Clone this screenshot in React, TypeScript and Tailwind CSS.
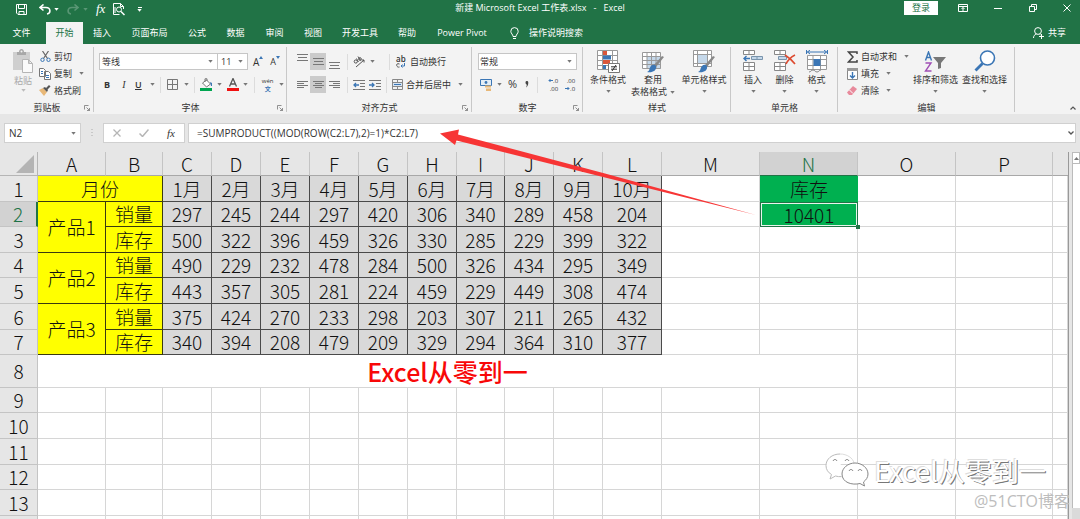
import type { ReactNode } from "react";

const UI = "font-['Open_Sans','Noto_Sans_CJK_SC',sans-serif]";
const SHEET = "font-['Noto_Sans_CJK_SC',sans-serif]";

function Caret({ className = "text-[#777]" }: { className?: string }) {
  return (
    <svg width="5" height="3" viewBox="0 0 5 3" className={`shrink-0 ${className}`} aria-hidden="true">
      <path d="M.3 0h4.400L2.500 2.700z" fill="currentColor" />
    </svg>
  );
}

function Icon({ w, h, children }: { w: number; h: number; children: ReactNode }) {
  return (
    <svg width={w} height={h} viewBox={`0 0 ${w} ${h}`} fill="none" className="shrink-0" aria-hidden="true">
      {children}
    </svg>
  );
}

function Launcher({ label }: { label: string }) {
  return (
    <button aria-label={label} className="absolute right-1 bottom-[3px]">
      <Icon w={6} h={6}>
        <path d="M.5 4.500V.5h4M2.500 2.500l3 3M5.500 3v2.500H3" stroke="#777" strokeWidth=".8" />
      </Icon>
    </button>
  );
}

function Group({ title, width, launcher, children }: { title: string; width: string; launcher?: boolean; children: ReactNode }) {
  return (
    <section aria-label={title} className={`relative flex shrink-0 flex-col pt-1 ${width}`}>
      <div className="h-[52px]">{children}</div>
      <div className="flex h-[14px] items-center justify-center pt-[2px] leading-3">{title}</div>
      {launcher && <Launcher label={`${title}设置`} />}
      <span className="absolute top-[3px] right-0 bottom-[2px] w-px bg-[#c8c8c8]" />
    </section>
  );
}

function SmallButton({ icon, label, caret, muted }: { icon: ReactNode; label: string; caret?: boolean; muted?: boolean }) {
  return (
    <button className={`flex h-[17px] items-center gap-[3px] leading-3 ${muted ? "text-[#aaa]" : ""}`}>
      <span className="flex w-3 justify-center">{icon}</span>
      <span>{label}</span>
      {caret && <span className="pl-1"><Caret /></span>}
    </button>
  );
}

function BigButton({ icon, lines, width }: { icon: ReactNode; lines: string[]; width: string }) {
  return (
    <button className={`flex flex-col items-center text-[9px] leading-3 whitespace-nowrap ${width}`}>
      <span className="flex h-[26px] items-center">{icon}</span>
      <span>{lines[0]}</span>
      {lines[1] ? (
        <span className="flex items-center gap-[3px]">
          {lines[1]}
          <Caret />
        </span>
      ) : (
        <span className="flex h-[11px] items-center">
          <Caret />
        </span>
      )}
    </button>
  );
}

const tabs = [
  { name: "文件", cls: "w-[43px] text-white" },
  { name: "开始", cls: "ml-[3px] w-[37px] bg-[#f3f3f3] text-[#217346]" },
  { name: "插入", cls: "w-[38px] text-white" },
  { name: "页面布局", cls: "w-[57px] text-white" },
  { name: "公式", cls: "w-[38px] text-white" },
  { name: "数据", cls: "w-[39px] text-white" },
  { name: "审阅", cls: "w-[39px] text-white" },
  { name: "视图", cls: "w-[38px] text-white" },
  { name: "开发工具", cls: "w-[56px] text-white" },
  { name: "帮助", cls: "w-[38px] text-white" },
  { name: "Power Pivot", cls: "w-[72px] text-white" },
];

function TitleBar() {
  return (
    <div className="grid h-[22px] grid-cols-3 items-start pt-px text-white">
      <div className="flex h-4 items-center pl-4">
        <button aria-label="保存" className="mr-3">
          <Icon w={11} h={11}>
            <path d="M.5.5h10v10H2L.5 9zM2.500.5v4h6v-4M3 10.500v-3h5v3" stroke="#fff" />
          </Icon>
        </button>
        <button aria-label="撤消" className="flex items-center gap-[3px]">
          <Icon w={12} h={11}>
            <path d="M1 3.500h6c5 0 5 6 1 6.500M4.500.5l-3.500 3 3.500 3" stroke="#fff" strokeWidth="1.600" />
          </Icon>
          <Caret className="text-white" />
        </button>
        <button aria-label="恢复" className="ml-2 flex items-center gap-1 opacity-25">
          <Icon w={12} h={11}>
            <path d="M11 3.500H5c-5 0-5 6-1 6.500M7.500.5l3.500 3-3.500 3" stroke="#fff" strokeWidth="1.600" />
          </Icon>
          <Caret className="text-white" />
        </button>
        <button aria-label="插入函数" className="ml-2 font-['Liberation_Serif',serif] text-[13px] leading-4 italic">fx</button>
        <button aria-label="打印预览" className="ml-2">
          <Icon w={12} h={13}>
            <path d="M10.500 6V3.500l-3-3h-7v11h6M7.500.5v3h3M2 10V4" stroke="#fff" />
            <circle cx="6" cy="6.500" r="2.500" stroke="#fff" />
            <path d="M8 8.500l3.500 3.500" stroke="#fff" strokeWidth="1.500" />
          </Icon>
        </button>
        <button aria-label="自定义快速访问工具栏" className="ml-3 flex flex-col items-center gap-px">
          <span className="h-px w-1 bg-white" />
          <Caret className="text-white" />
        </button>
      </div>
      <h1 className="h-[13px] text-center text-[9px] leading-[13px] whitespace-pre">新建 Microsoft Excel 工作表.xlsx   -   Excel</h1>
      <div className="flex h-[14px] items-center justify-end pr-[9px]">
        <button className="mr-5 h-[14px] w-[34px] bg-white text-[9px] leading-[14px] text-[#217346]">登录</button>
        <button aria-label="功能区显示选项" className="mr-[26px]">
          <Icon w={10} h={8}>
            <path d="M.5.500h9v7h-9zM.5 2.500h9M5 7V3.500M3.500 5L5 3.500 6.500 5" stroke="#fff" />
          </Icon>
        </button>
        <button aria-label="最小化" className="mr-[27px]">
          <Icon w={8} h={8}><path d="M0 4.500h8" stroke="#fff" /></Icon>
        </button>
        <button aria-label="向下还原" className="mr-[26px]">
          <Icon w={8} h={8}><path d="M.5 2.500h5v5h-5zM2.500 2.500v-2h5v5h-2" stroke="#fff" /></Icon>
        </button>
        <button aria-label="关闭">
          <Icon w={8} h={8}><path d="M.5.500l7 7M7.500.500l-7 7" stroke="#fff" /></Icon>
        </button>
      </div>
    </div>
  );
}

function TabBar() {
  return (
    <nav className="flex h-[22px] items-stretch text-[9px] text-white">
      {tabs.map((t) => (
        <button key={t.name} className={`shrink-0 whitespace-nowrap ${t.cls}`}>{t.name}</button>
      ))}
      <button className="ml-3 flex items-center gap-[10px] whitespace-nowrap">
        <Icon w={9} h={13}>
          <path d="M3 9.500C3 7.500.8 6.500.8 4.300a3.700 3.700 0 017.400 0C8.200 6.500 6 7.500 6 9.500zM3 11.500h3" stroke="#fff" />
        </Icon>
        操作说明搜索
      </button>
      <button className="mr-[14px] ml-auto flex items-center gap-1">
        <Icon w={11} h={12}>
          <circle cx="5" cy="4" r="3.400" stroke="#fff" />
          <path d="M.5 11c0-2 1-3.500 3-4M6.500 7.200l1 .6M8.500 7v5M6 9.500h5" stroke="#fff" />
        </Icon>
        共享
      </button>
    </nav>
  );
}

function Lines({ rows }: { rows: [number, number][] }) {
  return (
    <Icon w={11} h={rows.length > 3 ? 10 : 9}>
      {rows.map(([x, w], i) => (
        <path key={i} d={`M${x} ${i * (rows.length > 3 ? 2 : 3) + 1.5}h${w}`} stroke="#777" />
      ))}
    </Icon>
  );
}

function ClipboardGroup() {
  return (
    <Group title="剪贴板" width="w-[94px]" launcher>
      <div className="flex">
        <button className="ml-3 flex w-[22px] flex-col items-center text-[#aaa]">
          <Icon w={22} h={26}>
            <path d="M1 4h17v18H1z" fill="#cfcfcf" />
            <path d="M5 7V4h2c0-4 5-4 5 0h2v3z" fill="#a8a8a8" />
            <circle cx="9.500" cy="3.500" r="1" fill="#f3f3f3" />
            <path d="M10.500 11.500h6l4 4v9h-10zM16.500 11.500v4h4" fill="#fafafa" stroke="#b5b5b5" />
          </Icon>
          <span className="leading-[13px]">粘贴</span>
          <span className="pt-[2px]"><Caret className="text-[#bbb]" /></span>
        </button>
        <div className="ml-[5px] flex flex-col">
          <SmallButton label="剪切" icon={
            <Icon w={11} h={11}>
              <path d="M2.500 0l5 7.500M8.500 0l-5 7.500" stroke="#666" strokeWidth="1.200" />
              <circle cx="2.500" cy="8.800" r="1.700" stroke="#3b76b5" />
              <circle cx="8.500" cy="8.800" r="1.700" stroke="#3b76b5" />
            </Icon>} />
          <SmallButton label="复制" caret icon={
            <Icon w={12} h={12}>
              <path d="M.5.500h4l2 2v6h-6zM5.500 3.500h4l2 2v6h-6z" fill="#fff" stroke="#777" />
              <path d="M2 3.500h2M2 5.500h2M7 7.500h3M7 9.500h3" stroke="#3b76b5" />
            </Icon>} />
          <SmallButton label="格式刷" icon={
            <Icon w={12} h={11}>
              <path d="M0 5l4-2 4 4-3 4z" fill="#e8b878" />
              <path d="M4 3l2-1 3 3-1 2zM7 3l3-3 1.500 1.500-3 3z" fill="#555" />
            </Icon>} />
        </div>
      </div>
    </Group>
  );
}

function FontGroup() {
  return (
    <Group title="字体" width="w-[193px]" launcher>
      <div className="flex items-center pt-[5px] pl-[5px]">
        <div className="relative flex h-[17px] w-[119px] items-center border border-[#c6c6c6] bg-white">
          <select aria-label="字体名称" className="w-full appearance-none pl-[2px] outline-none"><option>等线</option></select>
          <span className="pointer-events-none absolute right-1"><Caret /></span>
        </div>
        <div className="relative flex h-[17px] w-[30px] items-center border border-l-0 border-[#c6c6c6] bg-white">
          <select aria-label="字号" className="w-full appearance-none pl-[3px] outline-none"><option>11</option></select>
          <span className="pointer-events-none absolute right-1"><Caret /></span>
        </div>
        <button aria-label="增大字号" className="ml-[5px] flex items-start text-[10px] leading-3">A<Icon w={4} h={3}><path d="M0 3h4L2 0z" fill="#3b76b5" /></Icon></button>
        <button aria-label="减小字号" className="ml-[7px] flex items-start text-[9px] leading-3">A<Icon w={4} h={3}><path d="M0 0h4L2 3z" fill="#3b76b5" /></Icon></button>
      </div>
      <div className="mt-[6px] flex h-[17px] items-center pl-2">
        <button className="w-[10px] font-bold">B</button>
        <button className="ml-[7px] w-[10px] font-['Liberation_Serif',serif] text-[10px] italic">I</button>
        <button aria-label="下划线" className="ml-[6px] flex items-center gap-2"><span className="font-semibold underline">U</span><Caret /></button>
        <span className="mr-[6px] ml-[5px] h-4 w-px bg-[#dcdcdc]" />
        <button aria-label="边框" className="flex items-center gap-[6px]">
          <Icon w={11} h={11}><path d="M.5.500h10v10h-10zM5.500.500v10M.5 5.500h10" stroke="#777" /></Icon>
          <Caret />
        </button>
        <span className="mx-[5px] h-4 w-px bg-[#dcdcdc]" />
        <button aria-label="填充颜色" className="flex items-center gap-1">
          <Icon w={13} h={13}>
            <path d="M2.500 5l4-3 4 4-4 3z" fill="#fff" stroke="#777" />
            <path d="M5 4V.8h2V3" stroke="#777" />
            <path d="M10 4l2 1v3h-1z" fill="#3b76b5" />
            <path d="M0 10h12v3H0z" fill="#00a550" />
          </Icon>
          <Caret />
        </button>
        <button aria-label="字体颜色" className="ml-[5px] flex items-center gap-1">
          <Icon w={12} h={13}>
            <path d="M2.500 8.500L6 .5l3.500 8M4 6h4" stroke="#555" strokeWidth="1.300" />
            <path d="M0 10h12v3H0z" fill="#f01010" />
          </Icon>
          <Caret />
        </button>
        <span className="mx-[6px] h-4 w-px bg-[#dcdcdc]" />
        <button aria-label="拼音" className="flex items-center gap-1">
          <span className="flex w-[14px] flex-col items-center text-[6px] leading-[8px]">wén<span className="font-bold text-[#3b76b5]">文</span></span>
          <Caret />
        </button>
      </div>
    </Group>
  );
}

function AlignGroup() {
  const on = "bg-[#cbcbcb]";
  return (
    <Group title="对齐方式" width="w-[185px]" launcher>
      <div className="flex items-center pt-[5px] pl-[7px]">
        <button aria-label="顶端对齐" className="flex h-[17px] w-4 items-start justify-center"><Lines rows={[[0, 11], [1, 9], [0, 11]]} /></button>
        <button aria-label="垂直居中" className={`flex h-[17px] w-4 items-center justify-center ${on}`}><Lines rows={[[0, 11], [1, 9], [0, 11]]} /></button>
        <button aria-label="底端对齐" className="flex h-[17px] w-4 items-end justify-center"><Lines rows={[[0, 11], [1, 9], [0, 11]]} /></button>
        <span className="mx-[5px] h-4 w-px bg-[#dcdcdc]" />
        <button aria-label="方向" className="flex items-center gap-1">
          <Icon w={13} h={12}>
            <path d="M3 11l8-7M8.500 4H11v2.500" stroke="#555" />
            <circle cx="2.800" cy="5.500" r="1.600" stroke="#555" />
            <path d="M3.500 2.500l2 3.500M5 .5l2.500 4" stroke="#555" />
            <circle cx="7" cy="3" r="1.300" stroke="#555" />
          </Icon>
          <Caret />
        </button>
        <span className="mr-[6px] ml-[14px] h-4 w-px bg-[#dcdcdc]" />
        <button className="flex items-center gap-1">
          <span className="flex w-[10px] flex-col items-start text-[8px] leading-[8px] font-semibold">
            <span>ab</span>
            <Icon w={9} h={5}>
              <path d="M3.500 1C1 0 .5 1.500.7 2.500S2 4.500 3.500 4" stroke="#555" />
              <path d="M8.500 0v3H5M6.500 1.500L5 3l1.500 1.500" stroke="#3b76b5" />
            </Icon>
          </span>
          自动换行
        </button>
      </div>
      <div className="mt-[6px] flex h-[17px] items-center pl-[7px]">
        <button aria-label="左对齐" className="flex h-[17px] w-4 items-center justify-center"><Lines rows={[[0, 11], [0, 7], [0, 11], [0, 7]]} /></button>
        <button aria-label="居中" className={`flex h-[17px] w-4 items-center justify-center ${on}`}><Lines rows={[[0, 11], [2, 7], [0, 11], [2, 7]]} /></button>
        <button aria-label="右对齐" className="flex h-[17px] w-4 items-center justify-center"><Lines rows={[[0, 11], [4, 7], [0, 11], [4, 7]]} /></button>
        <span className="mx-[5px] h-4 w-px bg-[#dcdcdc]" />
        <button aria-label="减少缩进量">
          <Icon w={12} h={10}><path d="M0 .5h12M7 3.500h5M7 6.500h5M0 9.500h12" stroke="#777" /><path d="M6 5H1M3 3L1 5l2 2" stroke="#3b76b5" strokeWidth="1.300" /></Icon>
        </button>
        <button aria-label="增加缩进量" className="ml-1">
          <Icon w={12} h={10}><path d="M0 .5h12M7 3.500h5M7 6.500h5M0 9.500h12" stroke="#777" /><path d="M0 5h5M3 3l2 2-2 2" stroke="#3b76b5" strokeWidth="1.300" /></Icon>
        </button>
        <span className="mr-[5px] ml-[5px] h-4 w-px bg-[#dcdcdc]" />
        <button className="flex items-center gap-[3px]">
          <Icon w={11} h={11}>
            <path d="M.5.500h10v10h-10zM.5 3.500h10M.5 7.500h10M5.500.500v3M5.500 7.500v3" stroke="#888" />
            <path d="M1 4h9v3H1z" fill="#d6e4f2" />
            <path d="M2 5.500h7" stroke="#3b76b5" />
          </Icon>
          合并后居中
          <span className="pl-1"><Caret /></span>
        </button>
      </div>
    </Group>
  );
}

function DecimalIcon({ more }: { more?: boolean }) {
  return (
    <span className="flex w-3 flex-col text-[6px] leading-[8px]">
      <span className="flex items-center justify-end">
        {more && <Icon w={5} h={5}><path d="M5 2.500H1M2.500 1L1 2.500 2.500 4" stroke="#3b76b5" /></Icon>}
        {more ? ".0" : ".00"}
      </span>
      <span className="flex items-center justify-end">
        {!more && <Icon w={5} h={5}><path d="M0 2.500h4M2.500 1L4 2.500 2.500 4" stroke="#3b76b5" /></Icon>}
        {more ? ".00" : ".0"}
      </span>
    </span>
  );
}

function NumberGroup() {
  return (
    <Group title="数字" width="w-[111px]" launcher>
      <div className="pt-[5px] pl-[6px]">
        <div className="relative flex h-[17px] w-[99px] items-center border border-[#c6c6c6] bg-white">
          <select aria-label="数字格式" className="w-full appearance-none pl-px outline-none"><option>常规</option></select>
          <span className="pointer-events-none absolute right-1"><Caret /></span>
        </div>
      </div>
      <div className="mt-[6px] flex h-[17px] items-center pl-2">
        <button aria-label="会计数字格式" className="flex items-center gap-1">
          <Icon w={13} h={12}>
            <path d="M.5.500h11v6h-11z" fill="#e4eef7" stroke="#3b76b5" />
            <circle cx="6" cy="3.500" r="1.400" fill="#3b76b5" />
            <path d="M5 6.500h6v2H5zM6 9.500h5V12H6z" fill="#e8b878" />
          </Icon>
          <Caret />
        </button>
        <button className="ml-[6px] text-[11px]">%</button>
        <button aria-label="千位分隔样式" className="ml-2">
          <Icon w={4} h={7}><path d="M.5 1.500a1.400 1.400 0 112.800 0C3.300 4 2.500 5.500 1 6.500c.6-1.200.8-2 .7-3C1 3.400.5 2.500.5 1.500z" fill="#444" /></Icon>
        </button>
        <span className="mx-2 h-4 w-px bg-[#dcdcdc]" />
        <button aria-label="增加小数位数"><DecimalIcon more /></button>
        <button aria-label="减少小数位数" className="ml-[5px]"><DecimalIcon /></button>
      </div>
    </Group>
  );
}

function Brush() {
  return (
    <>
      <path d="M22 5l-8 10-2-2 8-9z" fill="#888" />
      <path d="M14 14c1 5-4 7-9 6 3-1 2-4 4-6 2-2 4-1 5 0z" fill="#3b76b5" />
    </>
  );
}

function StyleGroup() {
  return (
    <Group title="样式" width="w-[148px]">
      <div className="flex">
        <BigButton width="ml-[2px] w-[46px]" lines={["条件格式"]} icon={
          <Icon w={23} h={23}>
            <path d="M.5.500h20v19H.5zM.5 5.500h20M.5 10.500h20M.5 15.500h20M5.500.500v19M15.500.500v19" fill="#fff" stroke="#999" />
            <path d="M6 1h4v4H6zM6 10h7v4H6z" fill="#d9563b" />
            <path d="M6 5.500h8v4H6zM6 15h3v4H6z" fill="#3b76b5" />
            <path d="M11.500 13.500h11v9h-11z" fill="#fff" stroke="#777" />
            <path d="M14 16.800h6M14 19.200h6M19 15l-4 6" stroke="#333" />
          </Icon>} />
        <BigButton width="w-[44px]" lines={["套用", "表格格式"]} icon={
          <Icon w={23} h={23}>
            <path d="M.5 2.500h18v16H.5z" fill="#fff" />
            <path d="M5 7h14v12H5z" fill="#c5d8ea" />
            <path d="M.5 2.500h18v16H.5zM.5 6.500h18M.5 10.500h18M.5 14.500h18M5 2.500v16M9.500 2.500v16M14 2.500v16" stroke="#999" />
            <g transform="translate(0 2)"><Brush /></g>
          </Icon>} />
        <BigButton width="ml-1 w-[50px]" lines={["单元格样式"]} icon={
          <Icon w={23} h={23}>
            <path d="M.5.500h18v16H.5zM.5 4.500h18M.5 13.500h18M4.500.500v16M14.500.500v16" fill="#fff" stroke="#999" />
            <path d="M5 5h9v8H5z" fill="#c5d8ea" />
            <g transform="translate(0 2)"><Brush /></g>
          </Icon>} />
      </div>
    </Group>
  );
}

function CellsGroup() {
  return (
    <Group title="单元格" width="w-[107px]">
      <div className="flex pl-[6px]">
        <BigButton width="w-[32px]" lines={["插入"]} icon={
          <Icon w={20} h={22}>
            <path d="M.5.500h11v4H.5zM6 .5v4M.5 12.500h11v8H.5zM6 12.500v8M.5 16.500h11" fill="#fff" stroke="#888" />
            <path d="M8.500 6.500h11v3h-11zM14 6.500v3" fill="#c5d8ea" stroke="#7a95ad" />
            <path d="M7 8.500H1M3.500 6L1 8.500 3.500 11" stroke="#3b76b5" strokeWidth="1.400" />
          </Icon>} />
        <BigButton width="w-[31px]" lines={["删除"]} icon={
          <Icon w={22} h={22}>
            <path d="M.5.500h11v4H.5zM6 .5v4M.5 12.500h11v8H.5zM6 12.500v8M.5 16.500h11" fill="#fff" stroke="#888" />
            <path d="M4.500 6.500h8v3h-8z" fill="#c5d8ea" stroke="#7a95ad" />
            <path d="M11 5c3 2 7 5 10 9M21 5c-4 2-7 5-9 9" stroke="#dd4b30" strokeWidth="1.600" />
          </Icon>} />
        <BigButton width="w-[33px]" lines={["格式"]} icon={
          <Icon w={22} h={23}>
            <path d="M1.500 5.500h19v14h-19zM1.500 9.500h19M1.500 15.500h19M7 5.500v14M14.500 5.500v14" fill="#fff" stroke="#999" />
            <path d="M7.500 9h7v7h-7z" fill="#3b76b5" />
            <path d="M1 2h20M4 0L1.500 2 4 4M18 0l2.500 2L18 4M.5 0v4M21.500 0v4" stroke="#3b76b5" />
            <path d="M3 22c2 0 2-2 4-2s2 2 4 2 2-2 4-2" stroke="#888" />
          </Icon>} />
      </div>
    </Group>
  );
}

function EditGroup() {
  return (
    <Group title="编辑" width="w-[177px]">
      <div className="flex">
        <div className="flex w-[72px] flex-col pl-2">
          <SmallButton label="自动求和" caret icon={
            <Icon w={11} h={12}><path d="M10 3V1H1.500l4.500 5-4.500 5H10V9" stroke="#444" strokeWidth="1.500" /></Icon>} />
          <SmallButton label="填充" caret icon={
            <Icon w={11} h={12}><path d="M.5.500h10v11H.5z" fill="#fff" stroke="#888" /><path d="M0 0h11v3H0z" fill="#999" /><path d="M5.500 4v6M3 7.500L5.500 10 8 7.500" stroke="#3b76b5" strokeWidth="1.400" /></Icon>} />
          <SmallButton label="清除" caret icon={
            <Icon w={11} h={10}><path d="M6 0l4 3-5 6H2L0 6.500z" fill="#e88a9c" /><path d="M2.500 4L6 7.500" stroke="#fff" /></Icon>} />
        </div>
        <BigButton width="w-[51px]" lines={["排序和筛选"]} icon={
          <Icon w={23} h={21}>
            <path d="M1.500 9.500l3-8.500 3 8.500M2.500 6.500h4" stroke="#3b76b5" strokeWidth="1.400" />
            <path d="M1.500 12h5.500L1.500 20h6" stroke="#a04fb5" strokeWidth="1.400" />
            <path d="M9 6h13l-5 6v5l-3 1v-6z" fill="#777" />
          </Icon>} />
        <BigButton width="w-[47px]" lines={["查找和选择"]} icon={
          <Icon w={22} h={22}>
            <circle cx="13.500" cy="8" r="7" fill="#fff" stroke="#3b76b5" strokeWidth="1.600" />
            <path d="M8.500 13.500L1.500 20.500" stroke="#3b76b5" strokeWidth="2.800" />
          </Icon>} />
      </div>
    </Group>
  );
}

function FormulaBar() {
  return (
    <div className="my-[9px] flex h-5 items-stretch px-1 text-[#333]">
      <div className="flex w-[77px] items-center border border-[#d0d0d0] bg-white">
        <input aria-label="名称框" defaultValue="N2" className="w-full min-w-0 pl-1 text-[10px] outline-none" />
        <button aria-label="展开名称框" className="pr-1"><Caret /></button>
      </div>
      <span className="mx-[10px] self-center"><Icon w={2} h={8}><path d="M1 0v8" stroke="#aaa" strokeDasharray="1 2" /></Icon></span>
      <div className="flex w-[82px] items-center justify-between border border-[#d0d0d0] bg-white px-[9px]">
        <button aria-label="取消"><Icon w={8} h={8}><path d="M.5.500l7 7M7.500.500l-7 7" stroke="#b5b5b5" strokeWidth="1.300" /></Icon></button>
        <button aria-label="输入"><Icon w={10} h={8}><path d="M.5 4.500l3 3 6-7" stroke="#b5b5b5" strokeWidth="1.500" /></Icon></button>
        <button aria-label="函数" className="font-['Liberation_Serif',serif] text-[11px] leading-[14px] italic">fx</button>
      </div>
      <div className="ml-[3px] flex flex-1 items-center border border-[#d0d0d0] bg-white">
        <input aria-label="编辑栏" defaultValue="=SUMPRODUCT((MOD(ROW(C2:L7),2)=1)*C2:L7)" className="min-w-0 flex-1 pl-2 text-[10px] outline-none" />
        <button aria-label="展开编辑栏" className="pr-px"><Icon w={6} h={4}><path d="M.5.500L3 3 5.500.500" stroke="#555" strokeWidth="1.300" /></Icon></button>
      </div>
    </div>
  );
}

const months = ["1月", "2月", "3月", "4月", "5月", "6月", "7月", "8月", "9月", "10月"];
const data = [
  [297, 245, 244, 297, 420, 306, 340, 289, 458, 204],
  [500, 322, 396, 459, 326, 330, 285, 229, 399, 322],
  [490, 229, 232, 478, 284, 500, 326, 434, 295, 349],
  [443, 357, 305, 281, 224, 459, 229, 449, 308, 474],
  [375, 424, 270, 233, 298, 203, 307, 211, 265, 432],
  [340, 394, 208, 479, 209, 329, 294, 364, 310, 377],
];
const letters = "ABCDEFGHIJKLMNOP".split("");
const columns = ["w-[38px]", "w-[68px]", "w-[57px]", "w-[49px]", "w-[49px]", "w-[49px]", "w-[49px]", "w-[49px]", "w-[49px]", "w-[48px]", "w-[49px]", "w-[49px]", "w-[59px]", "w-[98px]", "w-[98px]", "w-[98px]", "w-[97px]"];
const rowHeights = ["h-[26px]", "h-[25px]", "h-[26px]", "h-[25px]", "h-[26px]", "h-[26px]", "h-[25px]"];
const lowerHeights = ["h-[25px]", "h-[26px]", "h-[26px]", "h-[25px]", "h-[26px]", "h-[26px]"];

const plain = "border-r border-b border-[#d6d6d6] bg-white";
const yellow = "border-r border-b border-[#3a3a10] bg-[#ffff00]";
const gray = "border-r border-b border-[#4a4a4a] bg-[#d9d9d9]";

function Blank({ count }: { count: number }) {
  return <>{Array.from({ length: count }, (_, i) => <td key={i} className={`${plain} p-0`} />)}</>;
}

function RowHead({ n, active }: { n: number; active?: boolean }) {
  return (
    <th scope="row" className={`border-b border-[#c4c4c4] p-0 text-center font-light ${active ? "border-r-2 border-r-[#217346] bg-[#d2d2d2] text-[#217346]" : "border-r bg-[#e6e6e6]"}`}>
      {n}
    </th>
  );
}

function Sheet() {
  return (
    <table className={`w-full table-fixed border-separate border-spacing-0 text-center text-[19px] leading-6 font-light text-[#111] ${SHEET}`}>
      <colgroup>
        {columns.map((c, i) => <col key={i} className={c} />)}
        <col />
      </colgroup>
      <thead>
        <tr className="h-6 leading-[23px]">
          <th className="border-r border-b border-[#b5b5b5] p-0 align-bottom">
            <span className="flex justify-end pr-[3px] pb-[2px]"><Icon w={18} h={18}><path d="M18 0v18H0z" fill="#b4b4b4" /></Icon></span>
          </th>
          {letters.map((l) => (
            <th key={l} scope="col" className={`border-r border-b p-0 font-light ${l === "N" ? "border-r-[#c4c4c4] border-b-[#217346] bg-[#d2d2d2] text-[#217346]" : "border-r-[#c4c4c4] border-b-[#a8a8a8]"}`}>{l}</th>
          ))}
          <th className="border-b border-[#a8a8a8] p-0" />
        </tr>
      </thead>
      <tbody>
        <tr className={rowHeights[0]}>
          <RowHead n={1} />
          <td colSpan={2} className={`${yellow} p-0`}>月份</td>
          {months.map((m) => <td key={m} className={`${gray} p-0`}>{m}</td>)}
          <Blank count={1} />
          <td className="bg-[#00b050] p-0">库存</td>
          <Blank count={3} />
        </tr>
        {data.map((row, r) => (
          <tr key={r} className={rowHeights[r + 1]}>
            <RowHead n={r + 2} active={r === 0} />
            {r % 2 === 0 && <td rowSpan={2} className={`${yellow} p-0`}>产品{r / 2 + 1}</td>}
            <td className={`${yellow} p-0`}>{r % 2 === 0 ? "销量" : "库存"}</td>
            {row.map((v, c) => <td key={c} className={`${gray} p-0`}>{v}</td>)}
            <Blank count={1} />
            {r === 0 ? (
              <td className="relative bg-[#00b050] p-0 leading-[23px] shadow-[inset_0_0_0_1px_#217346,inset_0_0_0_2px_#e8f5ec]">
                10401
                <span className="absolute -right-[2px] -bottom-[2px] size-1 bg-[#217346]" />
              </td>
            ) : (
              <Blank count={1} />
            )}
            <Blank count={3} />
          </tr>
        ))}
        <tr className="h-[33px]">
          <RowHead n={8} />
          <td colSpan={14} className={`${plain} p-0 text-[25px] leading-8 font-medium text-[#f80808]`}>Excel从零到一</td>
          <Blank count={3} />
        </tr>
        {lowerHeights.map((h, i) => (
          <tr key={i} className={h}>
            <RowHead n={i + 9} />
            <Blank count={17} />
          </tr>
        ))}
      </tbody>
    </table>
  );
}

function Watermark() {
  return (
    <div className="pointer-events-none absolute right-[10px] bottom-[6px] flex flex-col items-end">
      <div className={`mr-6 flex items-center gap-[5px] text-[27px] leading-[30px] text-white ${SHEET} [text-shadow:1px_1px_0_#777,-1px_-1px_0_#ddd]`}>
        <Icon w={44} h={36}>
          <path d="M15 1C7 1 1 6 1 12.500c0 4 2 7 5.500 9L5 26l5.500-3c2 .6 4 .8 6 .6" fill="#fff" stroke="#bbb" />
          <path d="M15 1c7 0 13 4 14 9" stroke="#ddd" />
          <path d="M30 10c7 0 13 5 13 11 0 3.500-2 6-4.500 8l1 4-4.500-2.500c-8 2-18-1-18-9.500 0-6 6-11 13-11z" fill="#fff" stroke="#888" />
          <path d="M8 8c1-2 3-2 4 0M20 8c1-2 3-2 4 0M24 18c1-2 3-2 4 0M33 18c1-2 3-2 4 0" stroke="#777" />
        </Icon>
        Excel从零到一
      </div>
      <div className="text-[16px] leading-[24px] text-[#bdbdbd]">@51CTO博客</div>
    </div>
  );
}

export default function App() {
  return (
    <main className={`relative flex h-screen flex-col overflow-hidden bg-[#e6e6e6] text-[9px] text-[#333] ${UI}`}>
      <header className="bg-[#217346]">
        <TitleBar />
        <TabBar />
      </header>
      <div className="relative flex h-[70px] shrink-0 bg-[#f3f3f3]">
        <ClipboardGroup />
        <FontGroup />
        <AlignGroup />
        <NumberGroup />
        <StyleGroup />
        <CellsGroup />
        <EditGroup />
        <button aria-label="折叠功能区" className="absolute right-1 bottom-1">
          <Icon w={6} h={4}><path d="M.5 3.500L3 1l2.500 2.500" stroke="#555" strokeWidth="1.200" /></Icon>
        </button>
      </div>
      <FormulaBar />
      <div className="flex min-h-0 flex-1">
        <div className="min-w-0 flex-1 overflow-hidden border-r border-[#999]">
          <Sheet />
        </div>
        <div className="ml-[3px] flex w-2 flex-col bg-[#dadada]">
          <button aria-label="向上滚动" className="flex h-3 items-center justify-center border border-[#bbb] bg-white">
            <Icon w={5} h={3}><path d="M0 3h5L2.500 0z" fill="#777" /></Icon>
          </button>
          <div className="mb-[11px] flex-1 border-l border-[#bbb] bg-white" />
        </div>
      </div>
      <svg className="pointer-events-none absolute top-[129px] left-[440px]" width="317" height="87" viewBox="440 129 317 87" aria-hidden="true">
        <path d="M440 133.500L459 129.500L458 134.500L605 173.500L756 215L603 177L456.500 140.500L455 145Z" fill="#f73535" />
      </svg>
      <Watermark />
    </main>
  );
}
